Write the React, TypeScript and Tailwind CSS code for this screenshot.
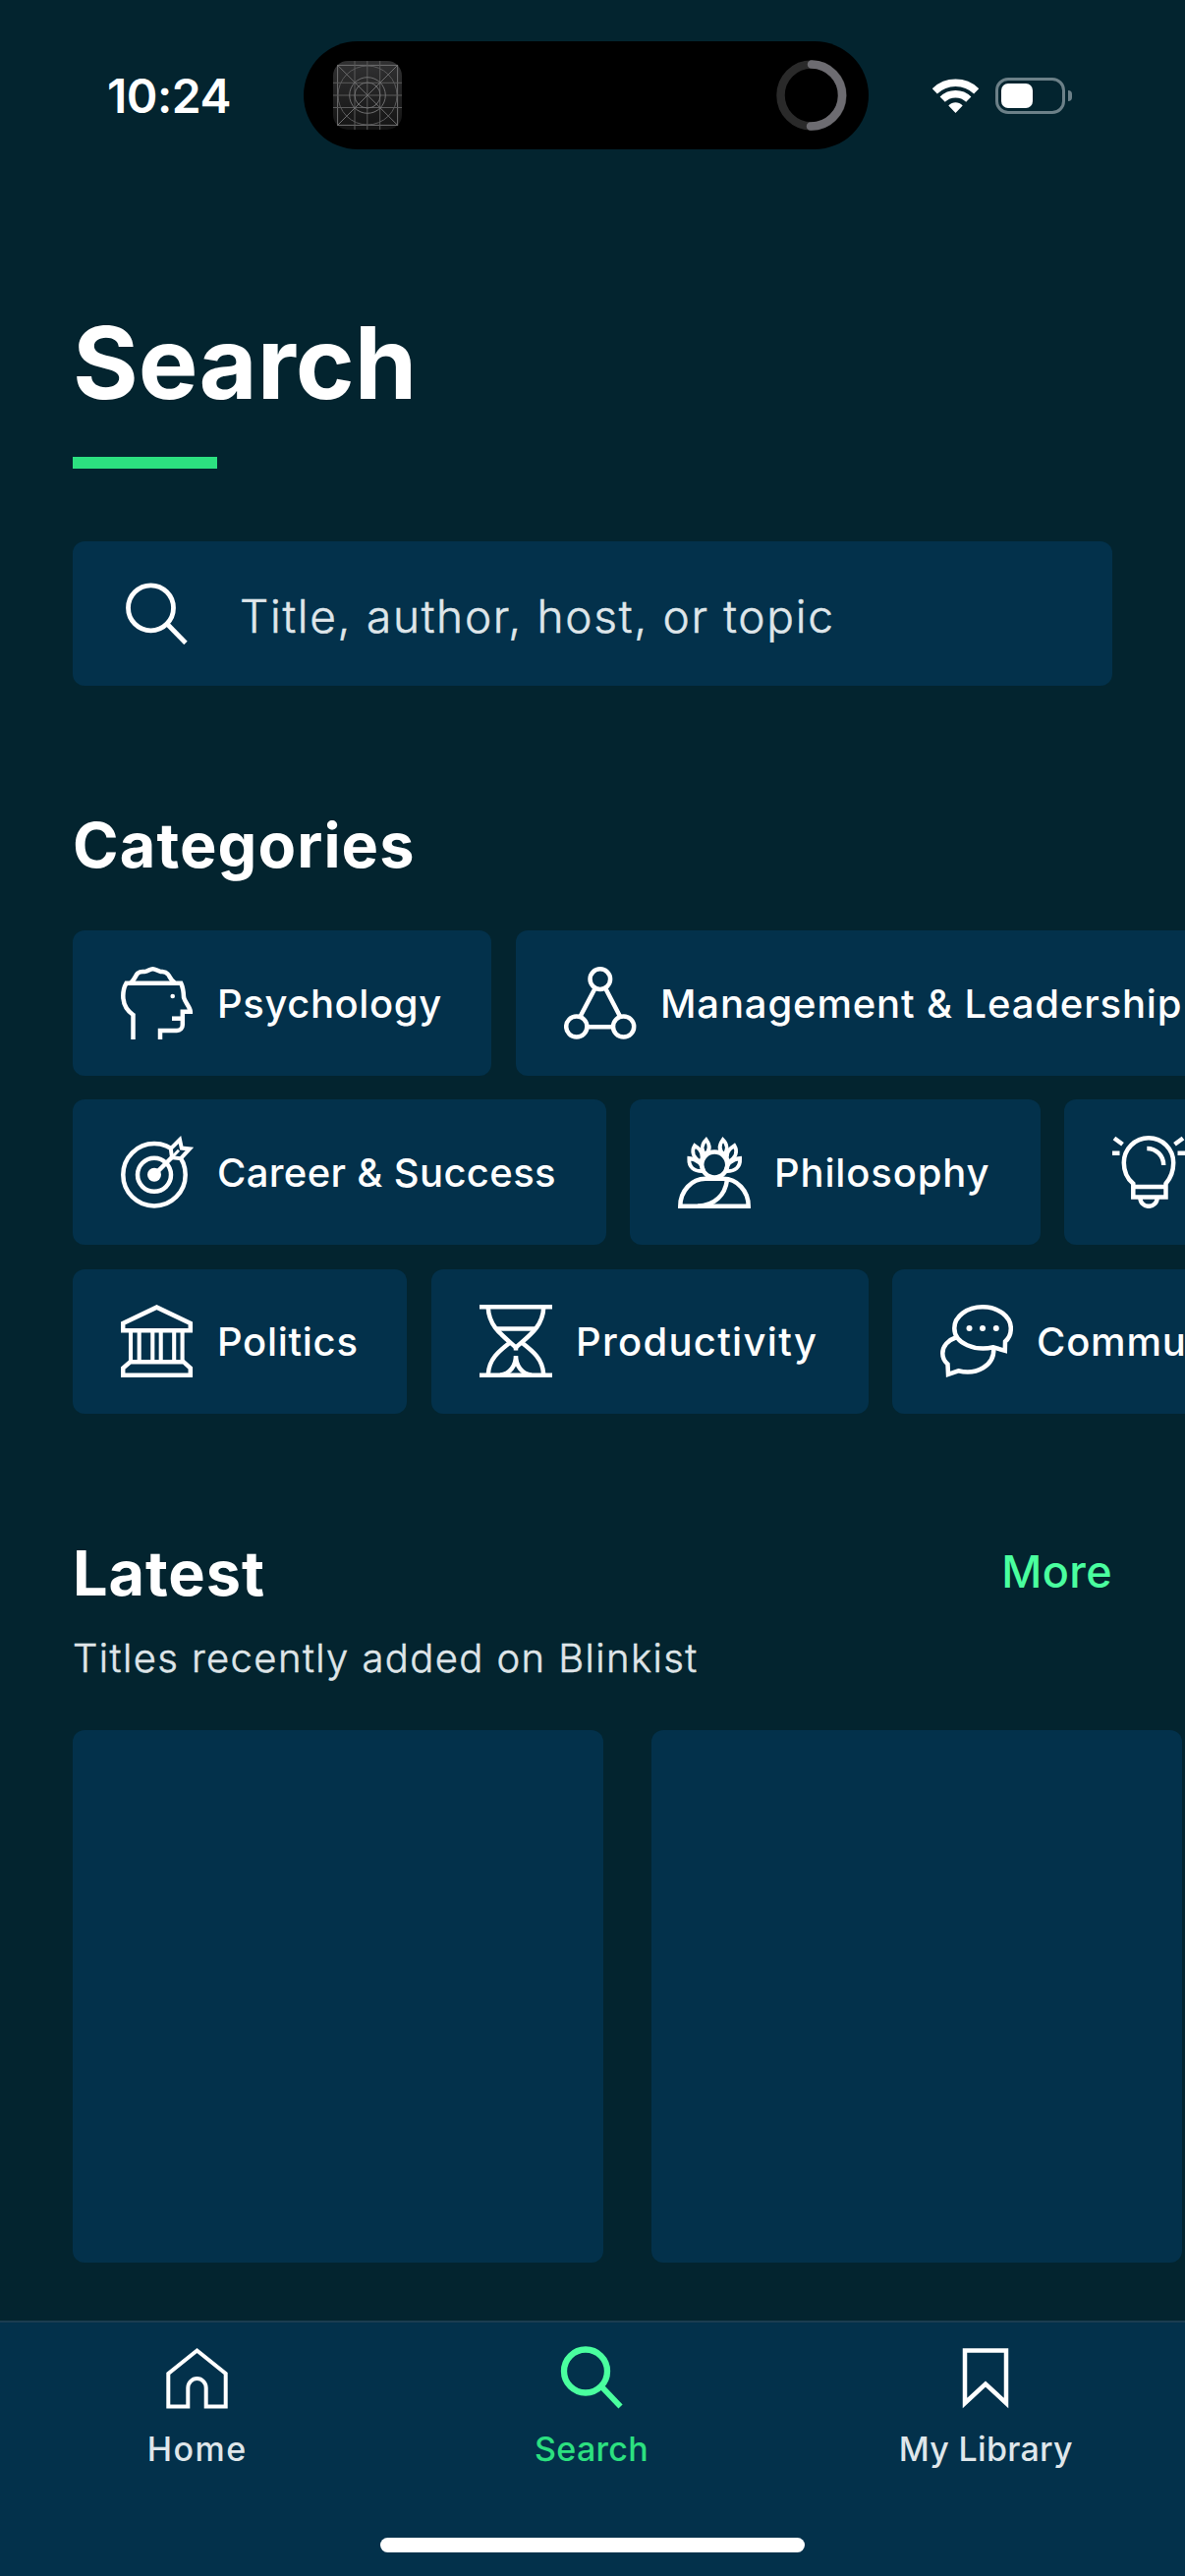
import type { ReactNode } from "react";

function Icon({ children }: { children: ReactNode }) {
  return (
    <svg viewBox="0 0 74 74" className="size-[74px] shrink-0" fill="none" stroke="white" strokeWidth="4.5">
      {children}
    </svg>
  );
}

const PsychologyIcon = (
  <Icon>
    <path d="M12.5 74V49C6 44.5 2.3 38 2.3 29.5C2.3 24.5 3.3 20.5 5.5 16.8H61.2C63.2 21 63.8 24 64 31C64.8 35.5 70.8 41.5 70.8 45.7H62.8V59C62.8 62.5 60.5 65 57 65H40V74" />
    <path d="M52 52.7H62.8" />
    <circle cx="52.7" cy="30" r="2.3" fill="white" stroke="none" />
    <path d="M10 16.5C14.5 13 14.5 9 17.3 6.5C20 4.6 22 5.4 25 4.9C28 4.4 29.5 2.3 32.5 2.3C35.5 2.3 37.5 4.5 40.5 4.9C43.5 5.3 45.5 4.8 47.8 7.5C50.3 10 50 13.5 55 16.5" />
  </Icon>
);

const ManagementIcon = (
  <Icon>
    <circle cx="36.8" cy="12.6" r="10.3" />
    <circle cx="12.8" cy="61" r="10.6" />
    <circle cx="60.6" cy="61" r="10.6" />
    <path d="M31.6 22L16.6 50.5M42.2 22L57 50.5M23.5 61.3H50" />
  </Icon>
);

const CareerIcon = (
  <Icon>
    <circle cx="34" cy="39.8" r="31.7" />
    <circle cx="34" cy="39.8" r="17" />
    <circle cx="34" cy="39.8" r="7" fill="white" stroke="none" />
    <path d="M34 39.8L60 14" />
    <path d="M60 4L50.8 13.2L52 22.2L61 23.2L70 13.4L61.8 12.6Z" fill="#03314b" strokeWidth="4" />
    <path d="M52.5 21.5L59 14.8" strokeWidth="3" />
  </Icon>
);

const Laurel = (
  <>
    <path d="M28.7 4C23.5 9 24 15 27.5 19.5C33 15 33 10 28.7 4Z" />
    <path d="M17 10C13 16.5 16 22.5 23 27C27 20 24 14.5 17 10Z" />
    <path d="M11.3 23C10.8 32 16 36.5 26 36C24.5 28.5 19 24 11.3 23Z" />
  </>
);

const PhilosophyIcon = (
  <Icon>
    <circle cx="37.2" cy="29.5" r="13" />
    <g strokeWidth="3.8">{Laurel}</g>
    <g strokeWidth="3.8" transform="translate(74.4 0) scale(-1 1)">{Laurel}</g>
    <path d="M2.3 71.7C2.3 56 14 43.8 28 43.8H46C60 43.8 71.7 56 71.7 71.7Z" />
    <path d="M50 45C48 60 38 71 20 71.7" />
  </Icon>
);

const BulbIcon = (
  <Icon>
    <path d="M21.3 62.5V48.8C15 43.5 11.8 36.5 11.8 27.5A25.2 25.2 0 0 1 62.2 27.5C62.2 36.5 59 43.5 54.5 48.8V62.5Z" />
    <path d="M21 52H55" />
    <path d="M28.4 63C28.4 68 32 71.8 37 71.8S45.7 68 45.7 63" />
    <path d="M35.3 13C45 13 52.2 20.5 52.2 30" />
    <path d="M2 2.5L10.5 8.7M0 17.7H7.5M72 2.5L63.5 8.7M74 17.7H66.5" />
  </Icon>
);

const PoliticsIcon = (
  <Icon>
    <path d="M2.2 26.3V19L36.5 2.6L70.8 19V26.3Z" />
    <path d="M10 26V58M18.7 26V58M32.3 26V58M40.7 26V58M54.2 26V58M62.6 26V58" strokeWidth="4.1" />
    <path d="M9.5 58.2H63.8L70.8 64.5V71.7H2.2V64.5Z" />
  </Icon>
);

const ProductivityIcon = (
  <Icon>
    <path d="M0 2.3H74M0 71.7H74" />
    <path d="M8.8 3C9.5 22 23 31 37 43.5C51 31 64.5 22 65.2 3" />
    <path d="M8.8 71C9.5 55 20 47 31 38.5M65.2 71C64.5 55 54 47 43 38.5" />
    <path d="M17.5 24.5H56.5M37 41V46.5" />
    <path d="M37 52C37 62 31 70.5 21 71.7M37 52C37 62 43 70.5 53 71.7" />
  </Icon>
);

const CommunicationIcon = (
  <Icon>
    <path d="M54 43.3C36 47.5 14.3 40 14.3 24C14.3 12 27 2.3 43 2.3S71.8 12 71.8 24C71.8 30 69.5 34.5 66 37.5L65.8 46.8L54 43.3Z" />
    <path d="M15.5 33.5C8 36 2.3 42 2.3 49.5C2.3 54 4 57.5 7.5 60.5L8 70.8L18.3 67.3C37 72 54.8 62 54.3 45" />
    <g fill="white" stroke="none">
      <circle cx="29.5" cy="24" r="3" />
      <circle cx="43" cy="24" r="3" />
      <circle cx="56.8" cy="24" r="3" />
    </g>
  </Icon>
);

function Chip({ icon, label, className }: { icon: ReactNode; label: string; className: string }) {
  return (
    <div className={`flex h-[147.67px] shrink-0 items-center gap-6 rounded-[12px] bg-[#03314b] pl-[49px] text-[40px] leading-[48px] font-medium whitespace-nowrap ${className}`}>
      {icon}
      <span className="pt-[2px]">{label}</span>
    </div>
  );
}

function StatusBar() {
  return (
    <div className="flex h-[110px] shrink-0 items-center">
      <span className="ml-[109px] w-[200px] pt-px text-[48px] leading-[56px] font-semibold tracking-[-0.5px]">10:24</span>
      <div className="flex h-[110px] w-[575px] items-center justify-between rounded-full bg-black pr-[22px] pl-[30px]">
        <svg viewBox="0 0 70 70" className="size-[70px]" fill="none" stroke="#6f6f70" strokeWidth="1">
          <defs>
            <linearGradient id="tile" x1="0" y1="0" x2="0" y2="1">
              <stop offset="0" stopColor="#313132" />
              <stop offset="1" stopColor="#131313" />
            </linearGradient>
          </defs>
          <rect width="70" height="70" rx="15" fill="url(#tile)" stroke="none" />
          <rect x="4.6" y="4.4" width="61" height="61" />
          <path d="M22 0V70M34.8 0V70M47.7 0V70M0 22.3H70M0 35H70M0 47.5H70" stroke="#5a5a5b" />
          <path d="M4.6 4.4L65.6 65.4M65.6 4.4L4.6 65.4" />
          <circle cx="35" cy="35" r="30" stroke="#5a5a5b" />
          <circle cx="35" cy="35" r="18.3" />
          <circle cx="35" cy="35" r="13" />
        </svg>
        <svg viewBox="0 0 72 72" className="size-[72px]" fill="none" strokeWidth="8.5" strokeLinecap="round">
          <circle cx="36" cy="36" r="31.5" stroke="#2a2a2a" />
          <path d="M36 4.5A31.5 31.5 0 0 1 35 67.5" stroke="#6d6c71" />
        </svg>
      </div>
      <svg viewBox="0 0 47 35" className="ml-[65px] h-[35px] w-[47px]" fill="none" stroke="white" strokeWidth="7.4">
        <path d="M2.3 12.8A30.5 30.5 0 0 1 44.7 12.8" />
        <path d="M10.2 21.2A19 19 0 0 1 36.8 21.2" />
        <path d="M16.3 27.4C20.5 23.2 26.5 23.2 30.7 27.4L23.5 35Z" fill="white" stroke="none" />
      </svg>
      <div className="ml-[17px] flex h-[37px] w-[71px] items-center rounded-[13px] border-[3px] border-[#6c8088] pl-[3px]">
        <div className="h-[25px] w-8 rounded-[7px] bg-white" />
      </div>
      <div className="ml-[3px] h-[11px] w-1 rounded-r-full bg-[#6c8088]" />
    </div>
  );
}

function Tab({ icon, label, className }: { icon: ReactNode; label: string; className: string }) {
  return (
    <div className="flex flex-1 flex-col items-center pt-6">
      {icon}
      <span className={`mt-[21px] text-[34px] leading-[40px] font-medium ${className}`}>{label}</span>
    </div>
  );
}

export default function App() {
  return (
    <div className="flex h-[2622px] w-[1206px] flex-col overflow-hidden bg-[#03242f] pt-[42px] font-['Inter',sans-serif] text-white">
      <StatusBar />

      <main className="flex flex-col pl-[74px]">
        <h1 className="mt-[157px] text-[102px] leading-[120px] font-bold">Search</h1>
        <div className="mt-9 h-3 w-[147px] bg-[#2ce080]" />

        <div className="mt-[74px] flex h-[147px] w-[1058px] items-center rounded-[12px] bg-[#03314b] pl-[54px]">
          <svg viewBox="0 0 63 63" className="size-[63px]" fill="none" stroke="white" strokeWidth="4.8">
            <circle cx="25.5" cy="25.8" r="23" />
            <path d="M43 43L61 61.5" />
          </svg>
          <span className="mt-[5px] ml-[53px] text-[46px] leading-[54px] font-light tracking-[1.7px] text-[#dfe6ea] [-webkit-text-stroke:0.5px_#dfe6ea]">
            Title, author, host, or topic
          </span>
        </div>

        <h2 className="mt-[126px] text-[63px] leading-[72px] font-bold tracking-[1.1px]">Categories</h2>
        <div className="mt-[51px] flex flex-col gap-[24.67px]">
          <div className="flex gap-[25px]">
            <Chip icon={PsychologyIcon} label="Psychology" className="w-[426px] tracking-[0.6px]" />
            <Chip icon={ManagementIcon} label="Management & Leadership" className="w-[730px] tracking-[0.85px]" />
          </div>
          <div className="flex gap-6">
            <Chip icon={CareerIcon} label="Career & Success" className="w-[543px] tracking-[0.35px]" />
            <Chip icon={PhilosophyIcon} label="Philosophy" className="w-[418px] tracking-[0.85px]" />
            <Chip icon={BulbIcon} label="Creativity" className="w-[400px] tracking-[0.8px]" />
          </div>
          <div className="flex gap-[25px]">
            <Chip icon={PoliticsIcon} label="Politics" className="w-[340px] tracking-[0.7px]" />
            <Chip icon={ProductivityIcon} label="Productivity" className="w-[445px] tracking-[1.3px]" />
            <Chip icon={CommunicationIcon} label="Communication Skills" className="-ml-px w-[640px] tracking-[0.8px]" />
          </div>
        </div>

        <div className="mt-[126px] flex w-[1058px] justify-between">
          <h2 className="text-[63px] leading-[72px] font-bold tracking-[0.9px]">Latest</h2>
          <span className="text-[45px] leading-[70px] font-medium tracking-[0.4px] text-[#4aff9f]">More</span>
        </div>
        <p className="mt-[27px] text-[40px] leading-[48px] font-light tracking-[1.4px] text-[#dfe5e8] [-webkit-text-stroke:0.5px_#dfe5e8]">
          Titles recently added on Blinkist
        </p>
        <div className="mt-[49px] flex gap-[49px]">
          <div className="h-[542px] w-[540px] shrink-0 rounded-[12px] bg-[#03314b]" />
          <div className="h-[542px] w-[540px] shrink-0 rounded-[12px] bg-[#03314b]" />
        </div>
      </main>

      <nav className="mt-auto flex h-[260px] shrink-0 flex-col items-center border-t-2 border-[#1b3d50] bg-[#03314b]">
        <div className="flex w-full pr-[2px]">
          <Tab
            label="Home"
            className="tracking-[1.5px] text-[#dfe6ea]"
            icon={
              <svg viewBox="0 0 64 64" className="size-16" fill="none" stroke="white" strokeWidth="4">
                <path d="M2.3 61.5V28L31.5 4.5L60.7 28V61.5H40.7V42.5A9.2 9.5 0 0 0 22.3 42.5V61.5Z" />
              </svg>
            }
          />
          <Tab
            label="Search"
            className="tracking-[0.3px] text-[#2ce080]"
            icon={
              <svg viewBox="0 0 64 64" className="size-16" fill="none" stroke="#4aff9f" strokeWidth="6.3">
                <circle cx="26" cy="25.5" r="22" />
                <path d="M42 41L61.5 61.5" strokeWidth="5.8" />
              </svg>
            }
          />
          <Tab
            label="My Library"
            className="tracking-[0.3px] text-[#dfe6ea]"
            icon={
              <svg viewBox="0 0 64 64" className="size-16" fill="none" stroke="white" strokeWidth="4.5">
                <path d="M11 4.5H53V58L32 38.5L11 58Z" />
              </svg>
            }
          />
        </div>
        <div className="mt-auto mb-6 h-[15px] w-[432px] rounded-full bg-white" />
      </nav>
    </div>
  );
}
